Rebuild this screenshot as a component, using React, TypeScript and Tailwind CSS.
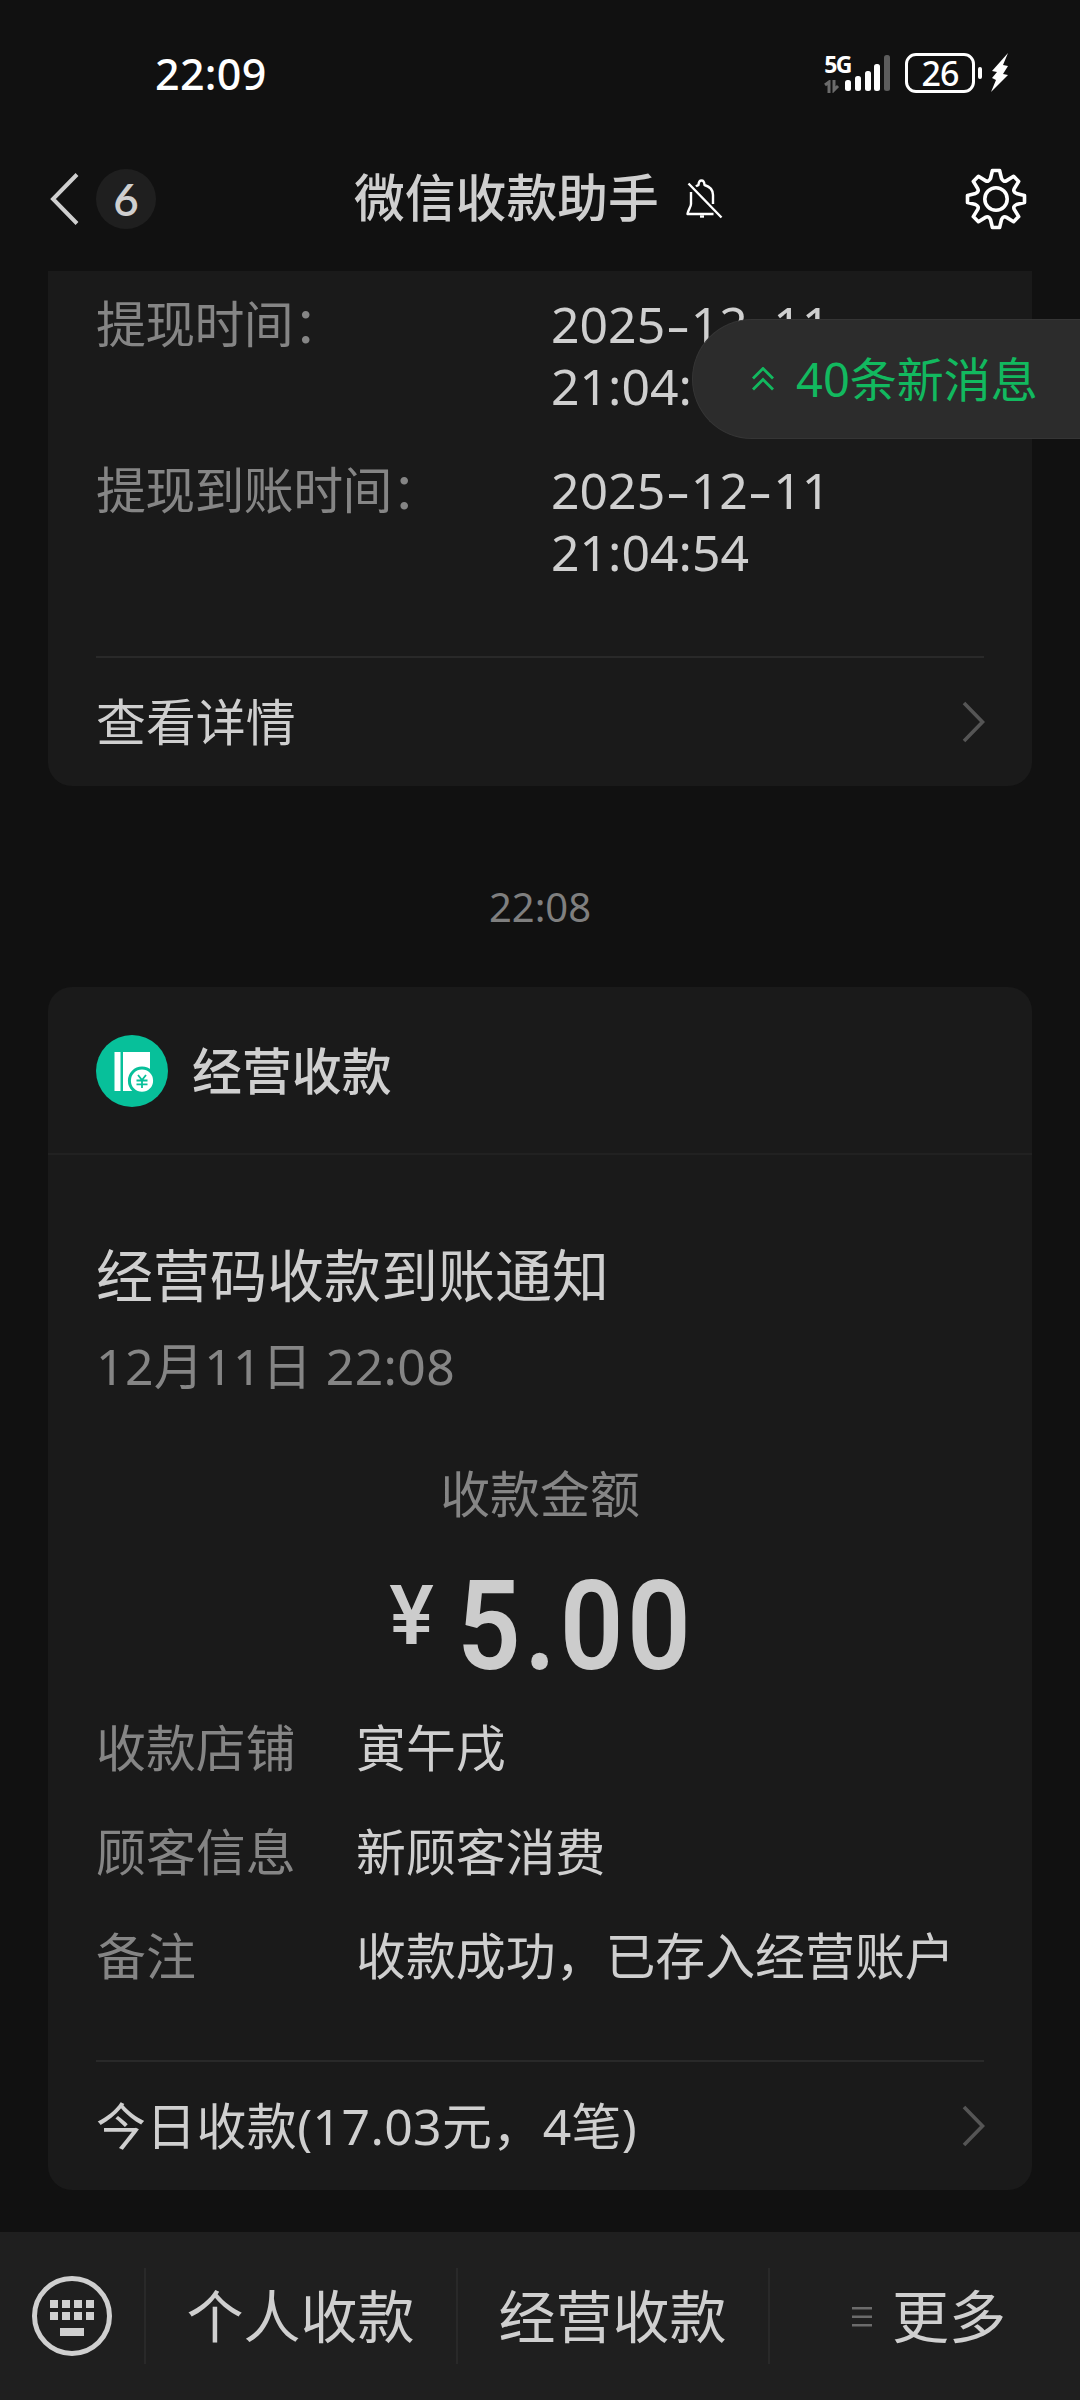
import type { ReactNode } from 'react';

interface DetailItem {
  label: string;
  value: string;
}

const withdrawTimes = [
  { label: '提现时间：', date: '2025-12-11', time: '21:04:' },
  { label: '提现到账时间：', date: '2025-12-11', time: '21:04:54' },
];

const paymentDetails: DetailItem[] = [
  { label: '收款店铺', value: '寅午戌' },
  { label: '顾客信息', value: '新顾客消费' },
  { label: '备注', value: '收款成功，已存入经营账户' },
];

export default function App() {
  return (
    <div className="relative flex h-[2400px] w-[1080px] flex-col overflow-hidden bg-[#111111] font-['Noto_Sans','Noto_Sans_CJK_SC',sans-serif] text-[49.9px] text-[#cfcfcf]">
      <StatusBar />
      <ChatHeader />
      <main className="flex flex-1 flex-col px-12">
        <WithdrawCard />
        <div className="mt-[88px] text-center text-[40px] leading-[66px] text-[#7f7f7f]">22:08</div>
        <PaymentCard />
      </main>
      <BottomMenu />
      <NewMessagesPill />
    </div>
  );
}

function StatusBar() {
  return (
    <div className="flex h-[146px] shrink-0 items-center justify-between pr-[72px] pl-[155px] text-white">
      <span className="text-[43px] leading-none font-medium tracking-[0.3px]">22:09</span>
      <div className="flex items-center">
        <div className="flex h-10 flex-col justify-between">
          <span className="h-[20px] text-[23px] leading-[22px] font-bold tracking-[-1.5px]">5G</span>
          <svg width="16" height="13" viewBox="0 0 16 13" fill="none" stroke="#6b6b6b" strokeWidth="3">
            <path d="M1 5l4-3v11M10 0v10l4-4" />
          </svg>
        </div>
        <svg className="-ml-1.5" width="50" height="40" viewBox="0 0 50 40" fill="white">
          <rect x="0" y="27" width="6" height="11" rx="2.5" />
          <rect x="10" y="23" width="6" height="15" rx="2.5" />
          <rect x="20" y="18" width="6" height="20" rx="2.5" />
          <rect x="29" y="11" width="6" height="27" rx="2.5" />
          <rect x="39" y="2" width="6" height="36" rx="2.5" fill="#5c5c5c" />
        </svg>
        <div className="ml-[10px] flex h-10 w-[70px] items-center justify-center rounded-[11px] border-[3px] border-white text-[34px] leading-none font-medium tracking-[-1px]">
          26
        </div>
        <div className="ml-[3px] h-3 w-1 rounded-full bg-white" />
        <svg className="ml-[9px]" width="17" height="40" viewBox="0 0 17 40" fill="white">
          <path d="M17 0 1 18 6 19 1 25 5 27 0 39 17 22 12 21 17 13 12 12Z" />
        </svg>
      </div>
    </div>
  );
}

function ChatHeader() {
  return (
    <header className="mb-[19px] flex h-[106px] shrink-0 items-center justify-between pr-[53px] pl-[50px]">
      <div className="flex w-[304px] items-center">
        <svg width="29" height="52" viewBox="0 0 29 52" fill="none" stroke="currentColor" strokeWidth="4">
          <path d="M27 1.5 3 26l24 24.500" />
        </svg>
        <span className="ml-[17px] flex size-[60px] items-center justify-center rounded-full bg-[#1f1f1f] font-['Lato'] text-[44px] leading-none font-semibold">
          6
        </span>
      </div>
      <div className="flex flex-1 items-center">
        <h1 className="pb-[2px] text-[50.8px] leading-none font-medium">微信收款助手</h1>
        <svg
          className="ml-[27px]"
          width="38"
          height="40"
          viewBox="0 0 38 40"
          fill="none"
          stroke="white"
          strokeWidth="2.4"
          strokeLinejoin="round"
        >
          <path d="M5 13v12c0 3-3 6-3.500 10h26M10 7.500c.8-.8 1.800-1.200 2.500-1.500.3-6 5.700-6 6 0 5 1.500 8.500 5 8.500 10v9M2.500 4.500l33 34" />
          <path d="M14 37.500h4" />
        </svg>
      </div>
      <GearIcon />
    </header>
  );
}

function GearIcon() {
  return (
    <svg width="62" height="62" viewBox="-31 -31 62 62" fill="none" stroke="white" strokeWidth="3.6" strokeLinejoin="round">
      <path d="M-3.600-28.500H3.600L5.500-20.500Q7.500-16.500 10.600-18.400L17.600-22.700 22.700-17.600 18.400-10.600Q16.500-7.500 20.500-5.500L28.500-3.600V3.600L20.500 5.500Q16.500 7.500 18.400 10.600L22.700 17.600 17.600 22.700 10.600 18.400Q7.500 16.500 5.500 20.500L3.600 28.500H-3.600L-5.500 20.500Q-7.500 16.500-10.600 18.400L-17.600 22.700-22.700 17.600-18.400 10.600Q-16.500 7.500-20.500 5.500L-28.500 3.600V-3.600L-20.500-5.500Q-16.500-7.500-18.400-10.600L-22.700-17.600-17.600-22.700-10.600-18.400Q-7.500-16.500-5.500-20.500Z" />
      <circle r="11.200" />
    </svg>
  );
}

function WithdrawCard() {
  return (
    <section className="flex h-[515px] shrink-0 flex-col rounded-b-3xl bg-[#1a1a1a] px-12 pt-[22px]">
      <div className="flex h-[364px] flex-col gap-[42px]">
        {withdrawTimes.map((item) => (
          <div key={item.label} className="flex leading-[62px]">
            <div className="w-[455px] tracking-[-0.6px] text-[#858585]">{item.label}</div>
            <div>
              <WideDate value={item.date} />
              <div>{item.time}</div>
            </div>
          </div>
        ))}
      </div>
      <CardLink>查看详情</CardLink>
    </section>
  );
}

// Hyphens are stretched to the width of a digit
function WideDate({ value }: { value: string }) {
  return (
    <div>
      {value.split('').map((char, index) =>
        char === '-' ? (
          <span key={index} className="mx-[4.7px] inline-block scale-x-150">
            -
          </span>
        ) : (
          char
        ),
      )}
    </div>
  );
}

function PaymentCard() {
  return (
    <section className="mt-[47px] flex h-[1203px] shrink-0 flex-col rounded-3xl bg-[#1a1a1a]">
      <div className="flex h-[168px] items-center gap-6 border-b-2 border-[#212121] px-12 pt-0.5">
        <LedgerIcon />
        <span className="font-medium">经营收款</span>
      </div>
      <div className="flex flex-1 flex-col px-12 pt-[80px]">
        <h2 className="text-[57px] leading-[80px]">经营码收款到账通知</h2>
        <div className="mt-[16px] leading-[70px] tracking-[0.4px] text-[#858585]">12月11日 22:08</div>
        <div className="mt-[58px] text-center leading-[70px] text-[#858585]">收款金额</div>
        <div className="mt-[27px] flex h-[140px] justify-center font-['Roboto'] font-medium text-[#cccccc]">
          <span className="mt-[10px] text-[84px] leading-[100px]">¥</span>
          <span className="ml-[23px] w-[234px] origin-left scale-x-90 pt-px text-[124px] leading-[140px] font-semibold tracking-[4px]">
            5.00
          </span>
        </div>
        <dl className="mt-[17px] flex flex-col gap-[34px]">
          {paymentDetails.map((item) => (
            <div key={item.label} className="flex leading-[70px]">
              <dt className="w-[260px] text-[#858585]">{item.label}</dt>
              <dd>{item.value}</dd>
            </div>
          ))}
        </dl>
      </div>
      <div className="px-12 tracking-[0.4px]">
        <CardLink>今日收款(17.03元，4笔)</CardLink>
      </div>
    </section>
  );
}

function CardLink({ children }: { children: ReactNode }) {
  return (
    <div className="flex h-[130px] items-center justify-between border-t-2 border-[#292929]">
      <span>{children}</span>
      <svg className="-mr-px" width="23" height="42" viewBox="0 0 23 42" fill="none" stroke="#555555" strokeWidth="3.6">
        <path d="M2 2l18.500 19L2 40" />
      </svg>
    </div>
  );
}

function LedgerIcon() {
  return (
    <svg width="72" height="72" viewBox="0 0 72 72">
      <circle cx="36" cy="36" r="36" fill="#07c09a" />
      <path d="M18.500 17h6v39h-6zM27 17h27v39H27z" fill="white" />
      <circle cx="46" cy="45.700" r="12.600" fill="white" stroke="#07c09a" strokeWidth="3" />
      <path d="M42 40l4 5 4-5M46 45v8M40.500 45.500h11M40.500 49.300h11" fill="none" stroke="#07c09a" strokeWidth="1.800" />
    </svg>
  );
}

function BottomMenu() {
  return (
    <nav className="flex h-[168px] shrink-0 items-center bg-[#1f1f1f] text-[57px]">
      <div className="flex w-[144px] justify-start pl-8">
        <svg width="80" height="80" viewBox="0 0 80 80" fill="currentColor">
          <circle cx="40" cy="40" r="37.500" fill="none" stroke="currentColor" strokeWidth="5" />
          <path d="M18 24h8v8h-8zM30 24h8v8h-8zM42 24h8v8h-8zM54 24h8v8h-8zM18 36h8v8h-8zM30 36h8v8h-8zM42 36h8v8h-8zM54 36h8v8h-8zM28 52h24v8H28z" />
        </svg>
      </div>
      <MenuItem>个人收款</MenuItem>
      <MenuItem>经营收款</MenuItem>
      <MenuItem>
        <svg className="mr-[20px] ml-[9px]" width="20" height="20" viewBox="0 0 20 20" fill="#6b6b6b">
          <path d="M0 0h20v2.500H0zM0 8.500h20v2.500H0zM0 17h20v2.500H0z" />
        </svg>
        更多
      </MenuItem>
    </nav>
  );
}

function MenuItem({ children }: { children: ReactNode }) {
  return (
    <div className="flex h-24 flex-1 items-center justify-center border-l-2 border-[#292929] pt-0.5 pr-px">
      {children}
    </div>
  );
}

// Floats over the message list, flush with the right edge
function NewMessagesPill() {
  return (
    <div className="absolute top-[319px] right-0 flex h-[120px] w-[388px] items-center rounded-l-full border border-r-0 border-[#353535] bg-[#2c2c2c] pl-[59px] text-[47px] text-[#12b95f]">
      <svg width="22" height="24" viewBox="0 0 22 24" fill="none" stroke="currentColor" strokeWidth="2.800">
        <path d="M1 11.500l10-10 10 10M1 22.500l10-10 10 10" />
      </svg>
      <span className="ml-[22px] whitespace-nowrap">40条新消息</span>
    </div>
  );
}
